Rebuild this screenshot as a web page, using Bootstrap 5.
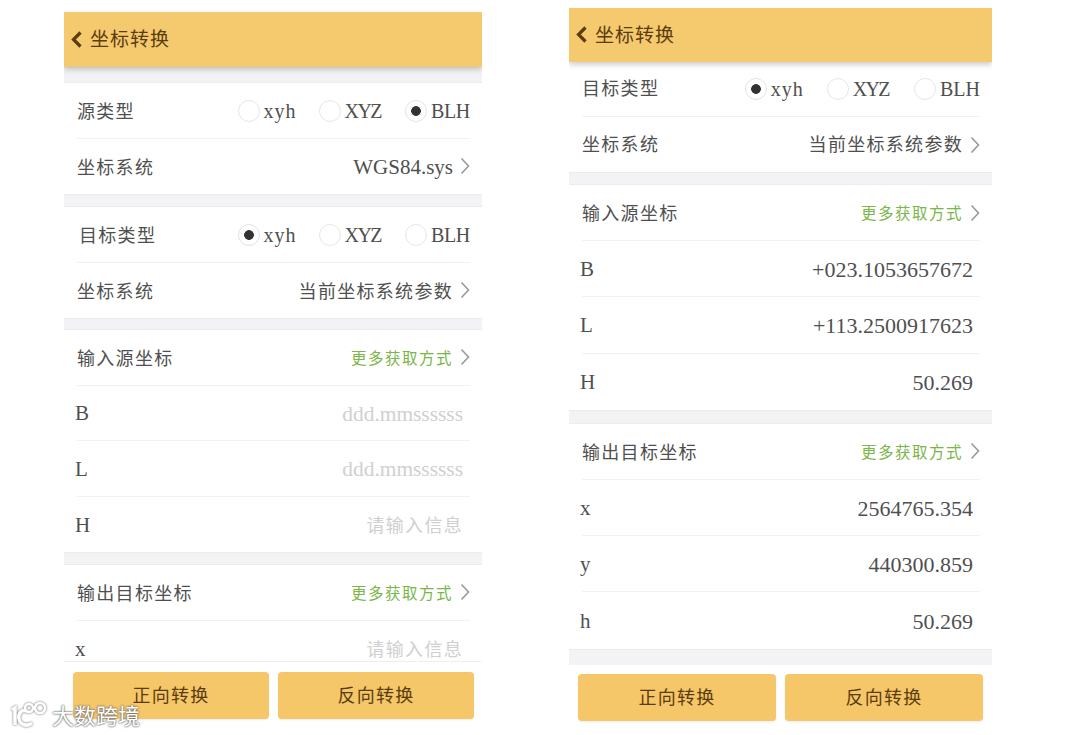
<!DOCTYPE html>
<html lang="zh">
<head>
    <meta charset="UTF-8">
    <meta name="viewport" content="width=device-width, initial-scale=1.0">
    <title>坐标转换</title>
    <link href="https://cdn.jsdelivr.net/npm/bootstrap@5.3.3/dist/css/bootstrap.min.css" rel="stylesheet">
    <style>
        html, body { height: 735px; overflow: hidden; background: #fff; }
        body { font-family: "Liberation Serif", "Noto Sans CJK SC", serif; color: #4f4f4f; position: relative; }
        .screens { height: 735px; padding-left: 64px; }
        .phone { height: 735px; overflow: hidden; background: #fff; }
        .phone-a { width: 418px; padding-top: 12px; margin-right: 87px; --row: 55.5px; }
        .phone-b { width: 423px; padding-top: 8px; --row: 56.2px; }
        .top-bar { height: 55px; flex: none; background: #f5c96e; color: #5a3c10; font-size: 19px; padding-left: 7px; box-shadow: 0 3px 5px rgba(90, 90, 90, .28); position: relative; z-index: 1; }
        .phone-b .top-bar { height: 54px; }
        .top-bar span { letter-spacing: 1px; margin-left: 7px; padding-top: 2px; }
        .scroll-area { flex: 1 1 auto; min-height: 0; overflow: hidden; }
        .sep { background: #f3f3f5; border-top: 1px solid #ececec; border-bottom: 1px solid #ececec; }
        .sep-16 { height: 16px; }
        .sep-13 { height: 13px; }
        .sep-12 { height: 12px; }
        .sep-14 { height: 14px; }
        .sep-17 { height: 17px; }
        .list-group-item.coord-row { height: var(--row); padding: 0; margin: 0 12px 0 13px; width: auto; border-color: #f1f1f1; background: transparent; color: #4f4f4f; font-size: 21px; }
        .phone-b .short-row { --row: 55px; }
        .cn { font-size: 18px; letter-spacing: 1.3px; white-space: nowrap; padding-top: 4px; }
        .cn-in { margin-left: 2px; }
        .short-row .cn { padding-top: 2px; }
        .short-row .coord-row:first-child .cn { padding-top: 0; }
        .short-row .type-group { padding-top: 0; }
        .axis { margin-left: -2px; padding-top: 2px; }
        .val { font-size: 21px; padding-top: 2px; }
        .num { font-size: 22px; margin-right: 7px; padding-top: 2px; }
        .hint { color: #d0d0d0; font-size: 21.4px; margin-right: 7px; padding-top: 2px; }
        .hint-cn { color: #d0d0d0; font-size: 18px; letter-spacing: 1.3px; margin-right: 7px; padding-top: 4px; }
        .more { color: #7ab648; font-size: 15.5px; letter-spacing: 1.5px; padding-top: 2px; }
        .chev { width: 10px; height: 18px; margin-left: 7px; flex: none; }
        .type-group { padding-top: 2px; }
        .type-opt { font-size: 20px; line-height: 1; margin-left: 22px; }
        .type-opt:first-child { margin-left: 0; }
        .type-opt:last-child { margin-left: 24px; }
        .phone-b .type-opt { margin-left: 23px; }
        .phone-b .type-opt:first-child { margin-left: 0; }
        .phone-b .type-opt:last-child { margin-left: 25px; }
        .phone-a .type-opt:last-child span { letter-spacing: -.3px; }
        .type-low { letter-spacing: 1px; }
        .type-up { letter-spacing: -1.6px; }
        .type-opt .form-check-input { width: 22px; height: 22px; margin: 0 4px 0 0; border: 1.5px solid #e6e6e6; background-color: #fff; flex: none; float: none; }
        .type-opt .form-check-input:checked { background-color: #fff; background-image: radial-gradient(circle, #333 0 4.5px, transparent 5.2px); border-color: #e3e3e3; }
        .type-opt .form-check-input:focus { box-shadow: none; }
        .bottom-bar { flex: none; height: 74px; padding: 10px 8px 0 9px; gap: 9px; border-top: 1px solid #efefef; background: #fff; }
        .phone-b .bottom-bar { height: 70px; padding: 9px 9px 0 9px; border-top: 0; }
        .btn.convert-btn { flex: 1 1 0; height: 47px; background: #f5c768; border: 0; border-radius: 4px; color: #5a3c10; font-size: 18px; letter-spacing: 1.3px; padding: 2px 0 0; box-shadow: 0 1px 2px rgba(0, 0, 0, .08); }
        .wm { position: absolute; left: 9px; top: 701px; color: #fff; font-family: "Noto Sans CJK SC", sans-serif; font-size: 22px; line-height: 28px; text-shadow: 0 0 2px #555, 0 0 2px #777; }
        .wm svg { margin-right: 3px; filter: drop-shadow(0 0 1px #666); }
        .wm span { margin-top: -2px; }
    </style>
</head>
<body>
    <svg width="0" height="0" class="position-absolute">
        <symbol id="chev" viewBox="0 0 10 18"><path d="M1.5 1.5 8.5 9 1.5 16.5" fill="none" stroke="#999" stroke-width="1.6"/></symbol>
        <symbol id="back" viewBox="0 0 12 18"><path d="M9.5 1.5 2.5 8.5l7 7" fill="none" stroke="#5f3c0e" stroke-width="3.2"/></symbol>
    </svg>

    <div class="screens d-flex align-items-start">
        <!-- left: empty form -->
        <div class="phone phone-a d-flex flex-column">
            <div class="top-bar d-flex align-items-center">
                <svg width="12" height="18"><use href="#back"/></svg><span>坐标转换</span>
            </div>
            <div class="scroll-area">
                <div class="sep sep-16"></div>
                <div class="list-group list-group-flush">
                    <div class="list-group-item coord-row d-flex justify-content-between align-items-center">
                        <span class="cn">源类型</span>
                        <div class="type-group d-flex align-items-center">
                            <label class="type-opt d-flex align-items-center"><input class="form-check-input" type="radio" name="a1"><span class="type-low">xyh</span></label>
                            <label class="type-opt d-flex align-items-center"><input class="form-check-input" type="radio" name="a1"><span class="type-up">XYZ</span></label>
                            <label class="type-opt d-flex align-items-center"><input class="form-check-input" type="radio" name="a1" checked><span>BLH</span></label>
                        </div>
                    </div>
                    <div class="list-group-item coord-row d-flex justify-content-between align-items-center">
                        <span class="cn">坐标系统</span>
                        <div class="d-flex align-items-center"><span class="val">WGS84.sys</span><svg class="chev"><use href="#chev"/></svg></div>
                    </div>
                </div>
                <div class="sep sep-13"></div>
                <div class="list-group list-group-flush">
                    <div class="list-group-item coord-row d-flex justify-content-between align-items-center">
                        <span class="cn cn-in">目标类型</span>
                        <div class="type-group d-flex align-items-center">
                            <label class="type-opt d-flex align-items-center"><input class="form-check-input" type="radio" name="a2" checked><span class="type-low">xyh</span></label>
                            <label class="type-opt d-flex align-items-center"><input class="form-check-input" type="radio" name="a2"><span class="type-up">XYZ</span></label>
                            <label class="type-opt d-flex align-items-center"><input class="form-check-input" type="radio" name="a2"><span>BLH</span></label>
                        </div>
                    </div>
                    <div class="list-group-item coord-row d-flex justify-content-between align-items-center">
                        <span class="cn">坐标系统</span>
                        <div class="d-flex align-items-center"><span class="cn">当前坐标系统参数</span><svg class="chev"><use href="#chev"/></svg></div>
                    </div>
                </div>
                <div class="sep sep-12"></div>
                <div class="list-group list-group-flush">
                    <div class="list-group-item coord-row d-flex justify-content-between align-items-center">
                        <span class="cn">输入源坐标</span>
                        <div class="d-flex align-items-center"><span class="more">更多获取方式</span><svg class="chev"><use href="#chev"/></svg></div>
                    </div>
                    <div class="list-group-item coord-row d-flex justify-content-between align-items-center"><span class="axis">B</span><span class="hint">ddd.mmssssss</span></div>
                    <div class="list-group-item coord-row d-flex justify-content-between align-items-center"><span class="axis">L</span><span class="hint">ddd.mmssssss</span></div>
                    <div class="list-group-item coord-row d-flex justify-content-between align-items-center"><span class="axis">H</span><span class="hint-cn">请输入信息</span></div>
                </div>
                <div class="sep sep-13"></div>
                <div class="list-group list-group-flush">
                    <div class="list-group-item coord-row d-flex justify-content-between align-items-center">
                        <span class="cn">输出目标坐标</span>
                        <div class="d-flex align-items-center"><span class="more">更多获取方式</span><svg class="chev"><use href="#chev"/></svg></div>
                    </div>
                    <div class="list-group-item coord-row d-flex justify-content-between align-items-center"><span class="axis">x</span><span class="hint-cn">请输入信息</span></div>
                </div>
            </div>
            <div class="bottom-bar d-flex align-items-start">
                <button class="btn convert-btn">正向转换</button>
                <button class="btn convert-btn">反向转换</button>
            </div>
        </div>

        <!-- right: filled in -->
        <div class="phone phone-b d-flex flex-column">
            <div class="top-bar d-flex align-items-center">
                <svg width="12" height="18"><use href="#back"/></svg><span>坐标转换</span>
            </div>
            <div class="scroll-area">
                <div class="list-group list-group-flush short-row">
                    <div class="list-group-item coord-row d-flex justify-content-between align-items-center">
                        <span class="cn">目标类型</span>
                        <div class="type-group d-flex align-items-center">
                            <label class="type-opt d-flex align-items-center"><input class="form-check-input" type="radio" name="b1" checked><span class="type-low">xyh</span></label>
                            <label class="type-opt d-flex align-items-center"><input class="form-check-input" type="radio" name="b1"><span class="type-up">XYZ</span></label>
                            <label class="type-opt d-flex align-items-center"><input class="form-check-input" type="radio" name="b1"><span>BLH</span></label>
                        </div>
                    </div>
                    <div class="list-group-item coord-row d-flex justify-content-between align-items-center">
                        <span class="cn">坐标系统</span>
                        <div class="d-flex align-items-center"><span class="cn">当前坐标系统参数</span><svg class="chev"><use href="#chev"/></svg></div>
                    </div>
                </div>
                <div class="sep sep-13"></div>
                <div class="list-group list-group-flush">
                    <div class="list-group-item coord-row d-flex justify-content-between align-items-center">
                        <span class="cn">输入源坐标</span>
                        <div class="d-flex align-items-center"><span class="more">更多获取方式</span><svg class="chev"><use href="#chev"/></svg></div>
                    </div>
                    <div class="list-group-item coord-row d-flex justify-content-between align-items-center"><span class="axis">B</span><span class="num">+023.1053657672</span></div>
                    <div class="list-group-item coord-row d-flex justify-content-between align-items-center"><span class="axis">L</span><span class="num">+113.2500917623</span></div>
                    <div class="list-group-item coord-row d-flex justify-content-between align-items-center"><span class="axis">H</span><span class="num">50.269</span></div>
                </div>
                <div class="sep sep-14"></div>
                <div class="list-group list-group-flush">
                    <div class="list-group-item coord-row d-flex justify-content-between align-items-center">
                        <span class="cn">输出目标坐标</span>
                        <div class="d-flex align-items-center"><span class="more">更多获取方式</span><svg class="chev"><use href="#chev"/></svg></div>
                    </div>
                    <div class="list-group-item coord-row d-flex justify-content-between align-items-center"><span class="axis">x</span><span class="num">2564765.354</span></div>
                    <div class="list-group-item coord-row d-flex justify-content-between align-items-center"><span class="axis">y</span><span class="num">440300.859</span></div>
                    <div class="list-group-item coord-row d-flex justify-content-between align-items-center"><span class="axis">h</span><span class="num">50.269</span></div>
                </div>
                <div class="sep sep-17"></div>
            </div>
            <div class="bottom-bar d-flex align-items-start">
                <button class="btn convert-btn">正向转换</button>
                <button class="btn convert-btn">反向转换</button>
            </div>
        </div>
    </div>

    <div class="wm d-flex align-items-center">
        <svg width="40" height="28" viewBox="0 0 40 28" fill="none" stroke="#fff" stroke-width="3.5">
            <path d="M3 9l3-2v17"/>
            <path d="M18 10c-6-2-9 3-8 8 1 6 8 8 13 4"/>
            <circle cx="20" cy="7" r="4" stroke-width="2.6"/>
            <circle cx="31" cy="7" r="5" stroke-width="2.6"/>
        </svg>
        <span>大数跨境</span>
    </div>
</body>
</html>
